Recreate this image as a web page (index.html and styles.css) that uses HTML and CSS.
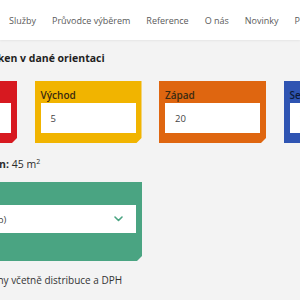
FILE: index.html
```html
<!DOCTYPE html>
<html lang="cs">
<head>
<meta charset="utf-8">
<link rel="stylesheet" href="styles.css">
</head>
<body>
<header class="top">
  <nav class="nav">
    <a>Služby</a>
    <a>Průvodce výběrem</a>
    <a>Reference</a>
    <a>O nás</a>
    <a>Novinky</a>
    <a>Produkty</a>
  </nav>
</header>
<main class="main">
  <h2 class="title">Zadejte plochu oken v dané orientaci</h2>
  <div class="cards">
    <div class="card red"><div class="label">Jih</div><div class="field">10</div></div>
    <div class="card yellow"><div class="label">Východ</div><div class="field">5</div></div>
    <div class="card orange"><div class="label">Západ</div><div class="field">20</div></div>
    <div class="card blue"><div class="label">Sever</div><div class="field">10</div></div>
  </div>
  <p class="sum"><b>Celková plocha oken:</b> 45 m<sup>2</sup></p>
  <div class="card green wide">
    <div class="label">Vytápění</div>
    <div class="field select"><span>Elektřina (přímotop)</span>
      <svg class="chev" width="9" height="6" viewBox="0 0 9 6"><polyline points="1,1 4.5,4.5 8,1" fill="none" stroke="#4aa482" stroke-width="1.6" stroke-linecap="round" stroke-linejoin="round"/></svg>
    </div>
  </div>
  <p class="note">Uvedené ceny včetně distribuce a DPH</p>
</main>
</body>
</html>
```
FILE: styles.css
```css
html, body { margin: 0; padding: 0; }
body {
  background: #f3f3f3;
  font-family: "Open Sans", "Liberation Sans", sans-serif;
  color: #2b2b2b;
  width: 300px;
  height: 300px;
  overflow: hidden;
}
.top {
  background: #fff;
  height: 40px;
  box-shadow: 0 1px 2px rgba(0,0,0,0.06);
  display: flex;
  align-items: center;
}
.nav {
  display: flex;
  gap: 16px;
  padding-left: 9px;
  font-size: 9px;
  color: #5a5a5a;
  white-space: nowrap;
}
.main {
  margin-left: -90px;
  padding-top: 10px;
}
.title {
  margin: 0 0 0 1px;
  font-size: 10.5px;
  line-height: 16px;
  font-weight: 700;
  color: #1f1f1f;
  white-space: nowrap;
}
.cards {
  display: grid;
  grid-template-columns: repeat(4, 107px);
  column-gap: 17.5px;
  margin-top: 15px;
}
.card {
  padding: 7px 6px 10px;
  clip-path: polygon(0 0, 100% 0, 100% calc(100% - 5px), calc(100% - 5px) 100%, 0 100%);
}
.label {
  font-size: 10px;
  line-height: 15px;
  font-weight: 600;
  color: #3a2a10;
}
.field {
  background: #fff;
  height: 30px;
  display: flex;
  align-items: center;
  padding-left: 10px;
  font-size: 9.5px;
  color: #444;
}
.red { background: #d71920; }
.yellow { background: #f1b400; }
.orange { background: #df6610; }
.blue { background: #2f54b2; }
.blue .label { color: #0d1a3a; }
.green { background: #4aa482; }
.wide {
  width: 220px;
  margin-top: 10px;
  padding: 8px 6px 28px;
}
.green .label { color: #163; }
.select {
  height: 28px;
  justify-content: space-between;
  padding-left: 2px;
  padding-right: 13px;
}
.chev { display: block; }
.sum {
  margin: 13px 0 0 -12px;
  font-size: 10.5px;
  line-height: 16px;
  white-space: nowrap;
}
.sum b { font-weight: 700; }
.sum sup { font-size: 7px; line-height: 0; }
.note {
  margin: 11px 0 0 33px;
  font-size: 10px;
  line-height: 16px;
  color: #333;
  white-space: nowrap;
}
```
